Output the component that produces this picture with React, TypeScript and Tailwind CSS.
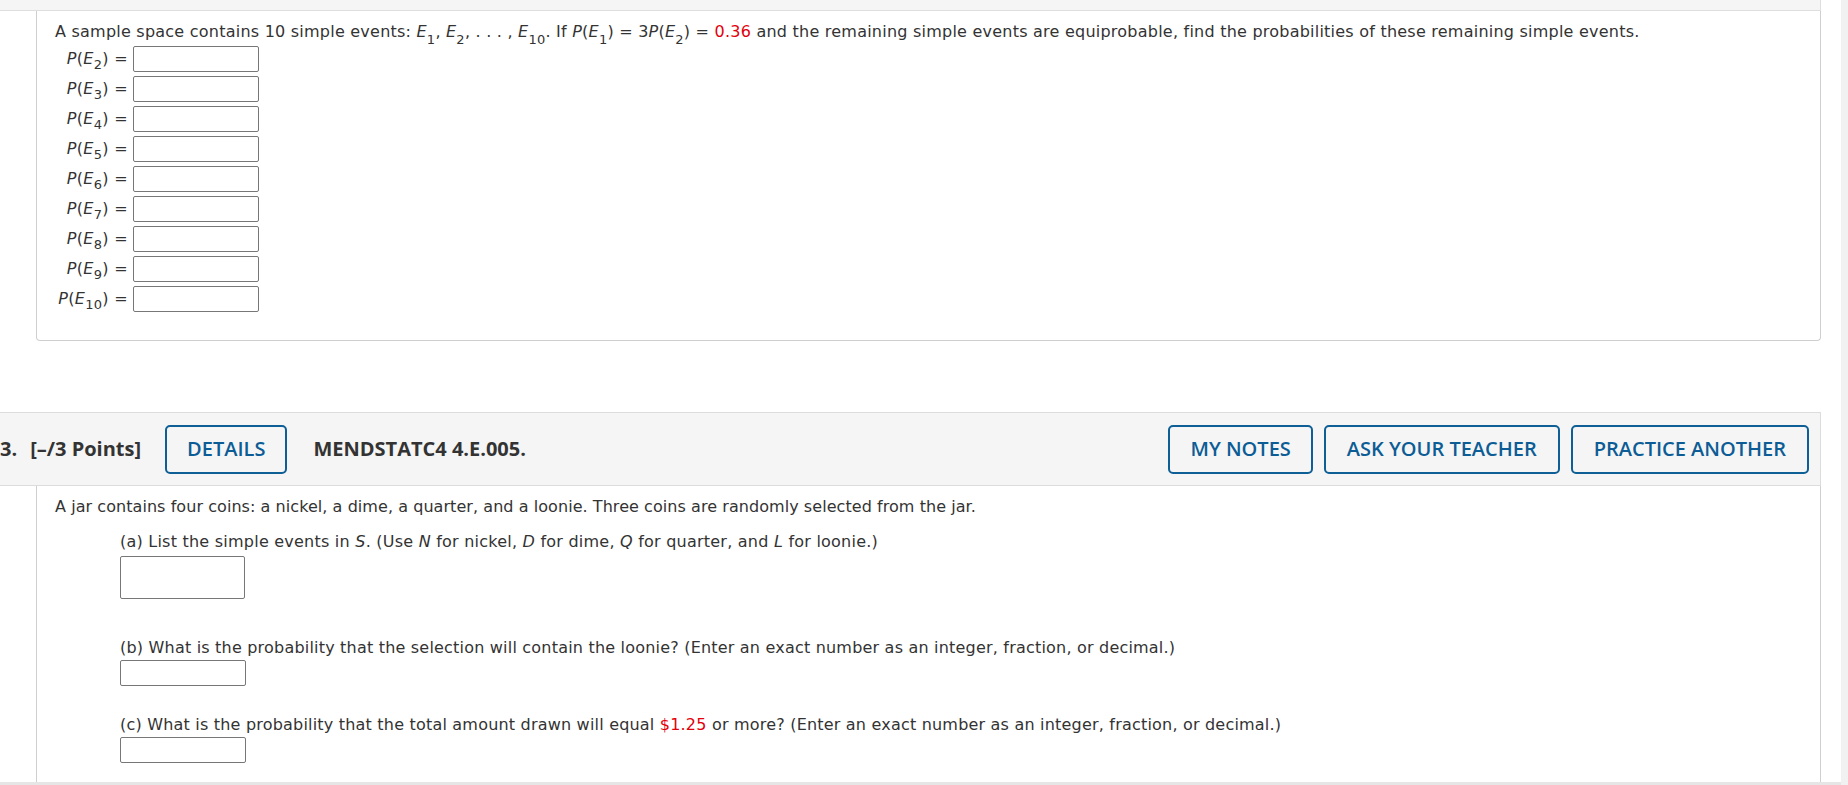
import React from 'react';

const Sub: React.FC<{ children: React.ReactNode; small?: boolean }> = ({ children, small }) => (
  <span className={`text-[13px] leading-none ${small ? 'align-[-5px]' : 'align-[-7px]'}`}>{children}</span>
);

const V: React.FC<{ children: React.ReactNode }> = ({ children }) => <span className="italic">{children}</span>;

const Red: React.FC<{ children: React.ReactNode }> = ({ children }) => <span className="text-[#e3000b]">{children}</span>;

const Box: React.FC<{ className?: string }> = ({ className = '' }) => (
  <input type="text" className={`block border border-[#777] rounded-[2px] bg-white ${className}`} />
);

const HeaderButton: React.FC<{ label: string; className?: string }> = ({ label, className = 'px-[21px]' }) => (
  <button className={`h-[49px] border-2 border-[#0f5f97] rounded-[5px] text-[20px] font-semibold text-[#0c5c95] leading-none whitespace-nowrap ${className}`}>
    {label}
  </button>
);

const App: React.FC = () => {
  const events = [2, 3, 4, 5, 6, 7, 8, 9, 10];

  return (
    <div className="flex h-[785px] w-[1848px] overflow-hidden bg-white text-[#333] font-['DejaVu_Sans',Verdana,sans-serif] text-[16px]">
      <div className="flex flex-col flex-1">
        <div className="flex flex-col flex-1 w-[1821px]">
          {/* tail of the previous question */}
          <div className="h-[11px] bg-[#f5f5f5] border-b border-r border-[#dedede]" />

          <div className="ml-[36px] border-l border-r border-b border-[#cfcfcf] rounded-b-[4px] pt-[11px] pl-[18px] pb-[28px]">
            <p className="leading-[20px] whitespace-nowrap tracking-[0.23px]">
              A sample space contains 10 simple events: <V>E</V><Sub>1</Sub>, <V>E</V><Sub>2</Sub>, . . . , <V>E</V><Sub>10</Sub>. If{' '}
              <V>P</V>(<V>E</V><Sub>1</Sub>) = 3<V>P</V>(<V>E</V><Sub>2</Sub>) = <Red>0.36</Red> and the remaining simple events are
              equiprobable, find the probabilities of these remaining simple events.
            </p>
            <div className="flex flex-col gap-[4px]">
              {events.map(n => (
                <div key={n} className="flex h-[26px] items-start">
                  <div className="w-[73px] text-right leading-[26px] whitespace-nowrap tracking-[0.3px]">
                    <V>P</V>(<V>E</V><Sub small>{n}</Sub>) =
                  </div>
                  <Box className="ml-[5px] w-[126px] h-[26px]" />
                </div>
              ))}
            </div>
          </div>

          <div className="mt-[71px] h-[74px] bg-[#f5f5f5] border-y border-r border-[#dcdcdc] flex items-center pr-[11px] font-['Open_Sans',sans-serif]">
            <span className="text-[20px] font-bold">3.</span>
            <span className="ml-[13px] text-[20px] font-bold">[–/3 Points]</span>
            <div className="ml-[24px]">
              <HeaderButton label="DETAILS" className="px-[20px]" />
            </div>
            <span className="ml-[26px] text-[20px] font-bold">MENDSTATC4 4.E.005.</span>
            <div className="ml-auto flex gap-[11px]">
              <HeaderButton label="MY NOTES" className="px-[20px]" />
              <HeaderButton label="ASK YOUR TEACHER" />
              <HeaderButton label="PRACTICE ANOTHER" />
            </div>
          </div>

          <div className="flex-1 ml-[36px] border-l border-r border-[#cfcfcf] pt-[11px] pl-[18px]">
            <p className="leading-[20px] tracking-[0.06px]">
              A jar contains four coins: a nickel, a dime, a quarter, and a loonie. Three coins are randomly selected from the jar.
            </p>
            <div className="pl-[65px]">
              <p className="mt-[15px] leading-[20px] tracking-[0.23px]">
                (a) List the simple events in <V>S</V>. (Use <V>N</V> for nickel, <V>D</V> for dime, <V>Q</V> for quarter, and{' '}
                <V>L</V> for loonie.)
              </p>
              <Box className="mt-[4px] w-[125px] h-[43px]" />

              <p className="mt-[39px] leading-[20px] tracking-[0.2px]">
                (b) What is the probability that the selection will contain the loonie? (Enter an exact number as an integer,
                fraction, or decimal.)
              </p>
              <Box className="mt-[2px] w-[126px] h-[26px]" />

              <p className="mt-[29px] leading-[20px] tracking-[0.2px]">
                (c) What is the probability that the total amount drawn will equal <Red>$1.25</Red> or more? (Enter an exact
                number as an integer, fraction, or decimal.)
              </p>
              <Box className="mt-[2px] w-[126px] h-[26px]" />
            </div>
          </div>
        </div>
        <div className="h-[3px] bg-[#e6e6e6]" />
      </div>
      <div className="w-[7px] bg-[#f1f1f1]" />
    </div>
  );
};

export default App;
